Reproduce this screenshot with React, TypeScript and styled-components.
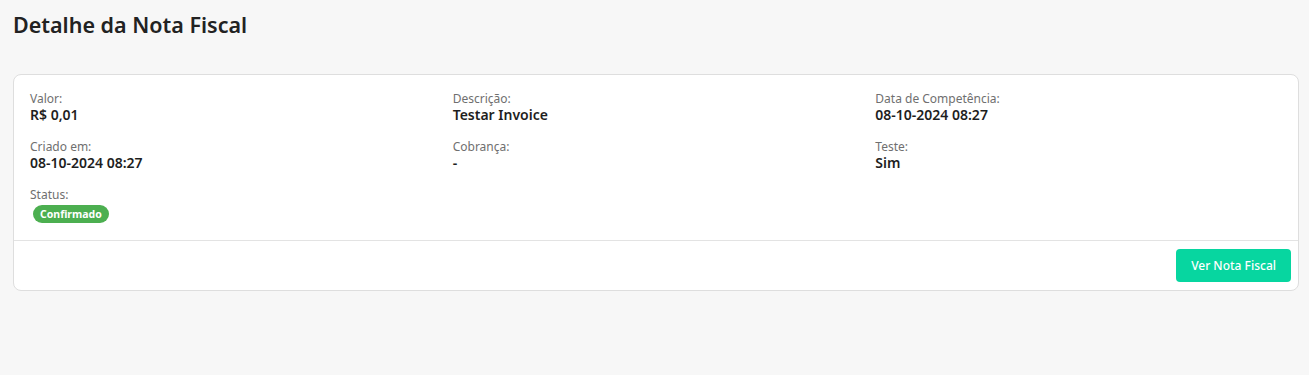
import React, { FC } from "react";
import styled, { createGlobalStyle } from "styled-components";

const GlobalStyle = createGlobalStyle`
  body {
    margin: 0;
    background: #f7f7f7;
    font-family: "Noto Sans", "Open Sans", sans-serif;
    color: #212529;
  }
`;

type Field = { label: string; value?: string; status?: string };

const fields: Field[] = [
  { label: "Valor:", value: "R$ 0,01" },
  { label: "Descrição:", value: "Testar Invoice" },
  { label: "Data de Competência:", value: "08-10-2024 08:27" },
  { label: "Criado em:", value: "08-10-2024 08:27" },
  { label: "Cobrança:", value: "-" },
  { label: "Teste:", value: "Sim" },
  { label: "Status:", status: "Confirmado" },
];

const App: FC = () => {
  return (
    <>
      <GlobalStyle />
      <Page>
        <Title>Detalhe da Nota Fiscal</Title>
        <Card>
          <Details>
            {fields.map((f) => (
              <Item key={f.label}>
                <Label>{f.label}</Label>
                {f.status ? <Badge>{f.status}</Badge> : <Value>{f.value}</Value>}
              </Item>
            ))}
          </Details>
          <Footer>
            <Button>Ver Nota Fiscal</Button>
          </Footer>
        </Card>
      </Page>
    </>
  );
};

export default App;

const Page = styled.main`
  display: flex;
  flex-direction: column;
  padding: 11px 10px 0 13px;
  min-height: 375px;
  box-sizing: border-box;
`;

const Title = styled.h1`
  margin: 0 0 35px;
  font-size: 21.5px;
  line-height: 28px;
  font-weight: 600;
  color: #222;
`;

const Card = styled.section`
  background: #fff;
  border: 1px solid #dedede;
  border-radius: 8px;
`;

const Details = styled.div`
  display: grid;
  grid-template-columns: repeat(3, 1fr);
  column-gap: 16px;
  row-gap: 16px;
  padding: 16px 16px 17px;
`;

const Item = styled.div`
  display: flex;
  flex-direction: column;
  align-items: flex-start;
`;

const Label = styled.span`
  font-size: 12px;
  line-height: 16px;
  color: #6f6f6f;
`;

const Value = styled.span`
  font-size: 14px;
  line-height: 16px;
  font-weight: 600;
  color: #1e1e1e;
`;

const Badge = styled.span`
  margin: 2px 0 0 3px;
  padding: 0 7px;
  height: 18px;
  line-height: 18px;
  border-radius: 9px;
  background: #4caf50;
  color: #fff;
  font-size: 10.5px;
  font-weight: 700;
`;

const Footer = styled.div`
  display: flex;
  justify-content: flex-end;
  padding: 8px 7px 8px;
  border-top: 1px solid #e3e3e3;
`;

const Button = styled.button`
  height: 33px;
  padding: 0 15px;
  border: none;
  border-radius: 4px;
  background: #07d6a0;
  color: #fff;
  font-family: inherit;
  font-size: 12px;
  font-weight: 500;
  cursor: pointer;
`;
